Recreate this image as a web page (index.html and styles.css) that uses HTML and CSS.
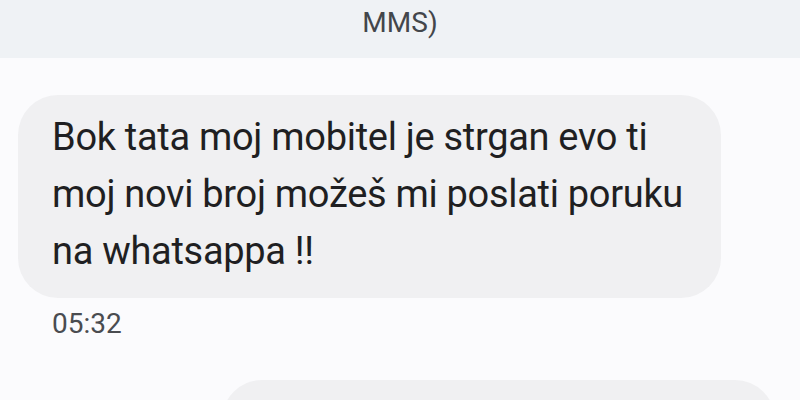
FILE: index.html
```html
<!DOCTYPE html>
<html lang="hr">
<head>
    <meta charset="UTF-8">
    <meta name="viewport" content="width=device-width, initial-scale=1.0">
    <title>Poruke</title>
    <link rel="stylesheet" href="styles.css">
</head>
<body>
    <div class="notice">
        <p class="notice-text">MMS)</p>
    </div>
    <div class="thread">
        <div class="msg incoming">
            <div class="bubble">Bok tata moj mobitel je strgan evo ti moj novi broj možeš mi poslati poruku na whatsappa !!</div>
            <div class="time">05:32</div>
        </div>
        <div class="msg outgoing">
            <div class="bubble">&nbsp;</div>
        </div>
    </div>
</body>
</html>
```

FILE: styles.css
```css
body {
    margin: 0;
    height: 100vh;
    overflow: hidden;
    background-color: #fbfbfd;
    font-family: Roboto, "Noto Sans", sans-serif;
    color: #1f1f22;
}
.notice {
    height: 58px;
    background-color: #eff2f5;
    display: flex;
    justify-content: center;
}
.notice-text {
    margin: 0;
    padding-top: 5px;
    font-size: 28px;
    line-height: 36px;
    color: #43464b;
}
.thread {
    display: flex;
    flex-direction: column;
    padding: 37px 0 0 18px;
}
.msg {
    display: flex;
    flex-direction: column;
}
.bubble {
    background-color: #f0f0f2;
    border-radius: 40px;
    box-sizing: border-box;
}
.incoming .bubble {
    width: 703px;
    padding: 14px 18px 18px 34px;
    font-size: 38px;
    line-height: 57px;
    letter-spacing: -0.3px;
}
.time {
    margin: 10px 0 0 34px;
    font-size: 28px;
    line-height: 32px;
    color: #4a4c50;
}
.outgoing {
    align-items: flex-end;
    margin-top: 40px;
    padding-right: 25px;
}
.outgoing .bubble {
    width: 553px;
    height: 120px;
}
```
